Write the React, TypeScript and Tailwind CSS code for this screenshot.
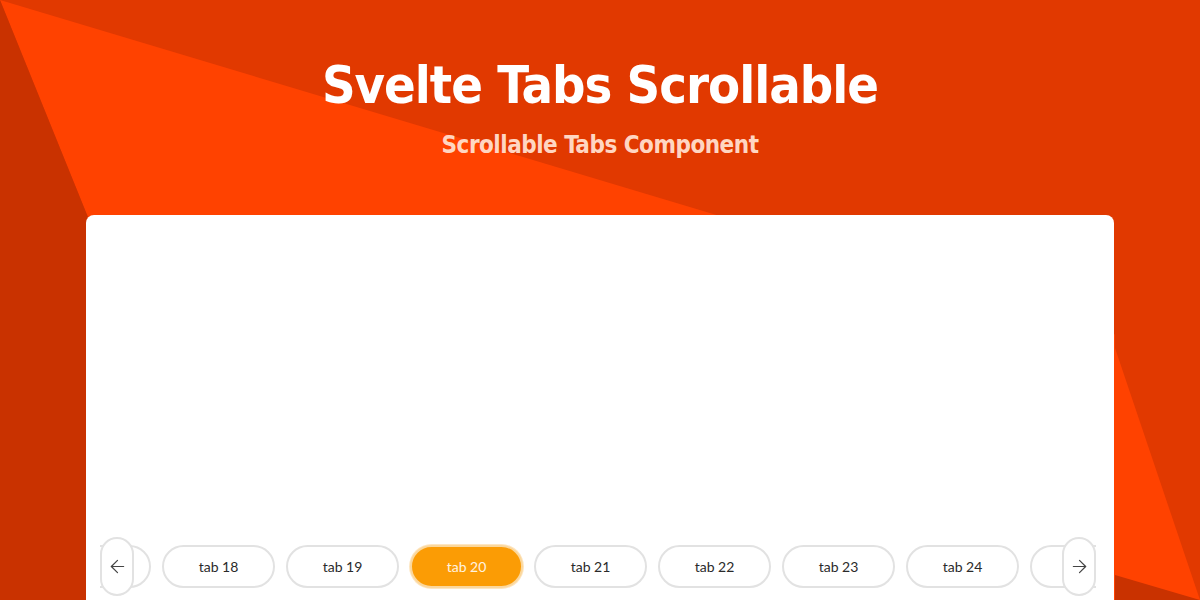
import React from "react";
import { ArrowLeft, ArrowRight } from "lucide-react";

// only the tabs around the scrolled position are in view
const TABS = [17, 18, 19, 20, 21, 22, 23, 24, 25];
const ACTIVE = 20;

const TITLE_FONT = "'DejaVu Sans Condensed', 'DejaVu Sans', sans-serif";

function Background() {
    return (
        <svg
            className="absolute inset-0 h-full w-full"
            viewBox="0 0 1200 600"
            preserveAspectRatio="none"
        >
            <rect x="0" y="0" width="1200" height="600" fill="#e13900" />
            <polygon points="0,0 1200,360 1200,600 243,600" fill="#ff4200" />
            <polygon points="0,0 243,600 0,600" fill="#c93200" />
            <polygon points="1115,0 1200,0 1200,600 1115,348" fill="#e13900" />
            <polygon points="1115,575 1200,600 1115,600" fill="#c93200" />
        </svg>
    );
}

function Tab({ n }: { n: number }) {
    const active = n === ACTIVE;
    return (
        <button
            className={
                active
                    ? "h-[43px] w-[113px] shrink-0 rounded-full border-2 border-[#fbd79c] bg-[#fb9c05] text-[14px] text-[#fff3e0] shadow-[0_0_0_1px_#fde6c2]"
                    : "h-[43px] w-[113px] shrink-0 rounded-full border-2 border-[#e2e2e2] bg-white text-[14px] text-[#2a2a2a]"
            }
            style={{ fontFamily: "Lato, 'Open Sans', sans-serif" }}
        >
            tab {n}
        </button>
    );
}

export default function App() {
    return (
        <div className="relative h-[600px] w-[1200px] overflow-hidden">
            <Background />
            <div className="relative flex flex-col items-center">
                <h1
                    className="mt-[55px] text-[52px] font-bold leading-[60px] tracking-[-1px] text-white"
                    style={{ fontFamily: TITLE_FONT }}
                >
                    Svelte Tabs Scrollable
                </h1>
                <p
                    className="mt-[15px] text-[24px] font-bold leading-[30px] tracking-[-0.5px] text-[#ffd6c2]"
                    style={{ fontFamily: TITLE_FONT }}
                >
                    Scrollable Tabs Component
                </p>
                <div className="mt-[55px] flex h-[420px] w-[1028px] flex-col rounded-[8px] bg-white pl-[14px] pr-[18px]">
                    <div className="h-[322px]" />
                    <div className="relative h-[59px]">
                        <div className="flex h-full items-center overflow-hidden">
                            <div className="ml-[-62px] flex gap-[11px]">
                                {TABS.map((n) => (
                                    <Tab key={n} n={n} />
                                ))}
                            </div>
                        </div>
                        <button className="absolute left-0 top-0 flex h-[59px] w-[34px] items-center justify-center rounded-full border-2 border-[#e2e2e2] bg-white text-[#444]">
                            <ArrowLeft size={21} strokeWidth={1.4} />
                        </button>
                        <button className="absolute right-0 top-0 flex h-[59px] w-[34px] items-center justify-center rounded-full border-2 border-[#e2e2e2] bg-white text-[#444]">
                            <ArrowRight size={21} strokeWidth={1.4} />
                        </button>
                    </div>
                </div>
            </div>
        </div>
    );
}
